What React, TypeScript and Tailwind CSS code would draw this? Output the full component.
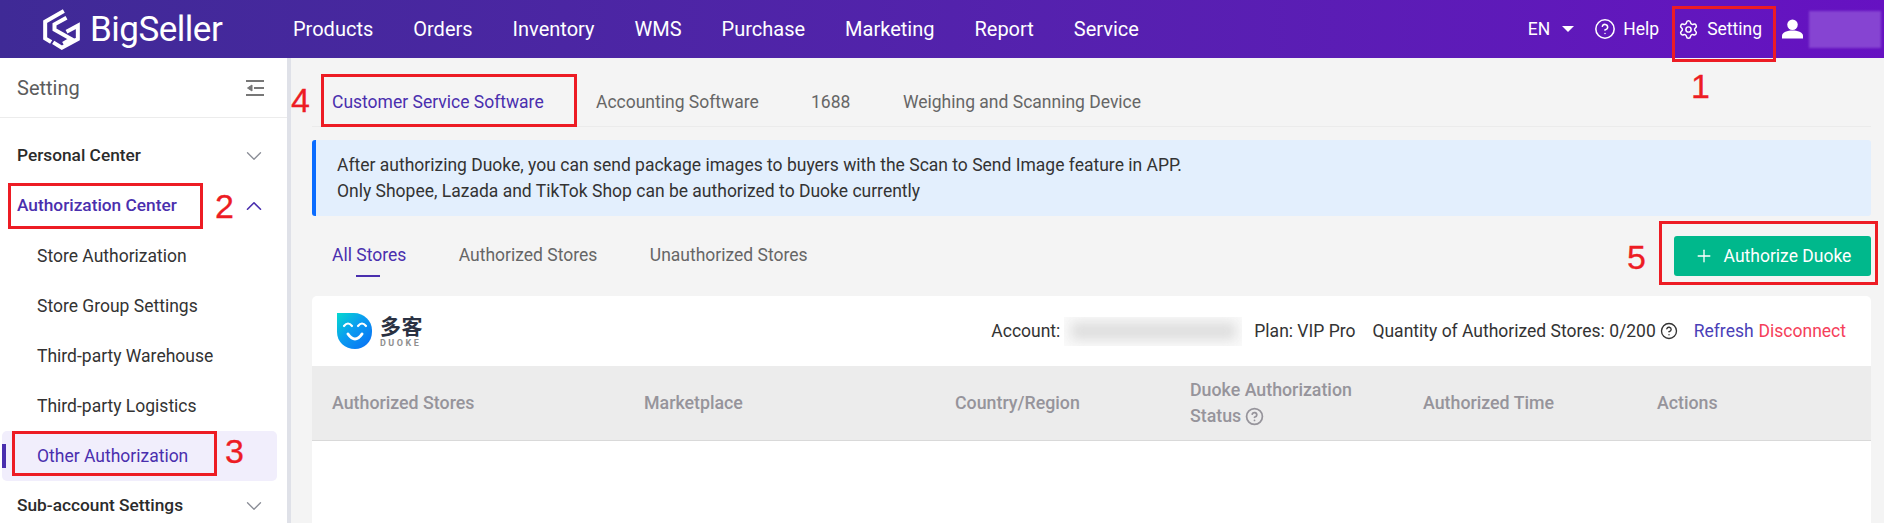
import React from "react";
import { ChevronDown, ChevronUp, Settings, Plus, CircleHelp } from "lucide-react";

const font = "[font-family:Roboto,'Noto_Sans_CJK_SC',sans-serif]";

function Logo() {
  return (
    <svg width="37" height="41" viewBox="0 0 110 123" fill="none" stroke="white" strokeWidth="12" strokeLinejoin="miter">
      <path d="M62 6 L6 38 V88 L24 99" />
      <path d="M70 26 L34 46 V62 L84 90 L60 104" />
      <path d="M30 100 L56 116 L104 90 V50 L70 68" />
    </svg>
  );
}

function DuokeLogo() {
  return (
    <svg width="35" height="36" viewBox="0 0 35 36" className="shrink-0">
      <defs>
        <linearGradient id="dk" x1="0" y1="0" x2="1" y2="1">
          <stop offset="0" stopColor="#05d9cf" />
          <stop offset="0.45" stopColor="#0a9cf0" />
          <stop offset="1" stopColor="#0a6cf5" />
        </linearGradient>
      </defs>
      <path d="M0 0 H17 C27 0 35 8 35 17 V19 C35 29 27 36 18 36 C8 36 0 29 0 19 Z" fill="url(#dk)" />
      <path d="M7 13 Q11 8 15 13 M21 13 Q25 8 29 13" stroke="white" strokeWidth="2.2" fill="none" strokeLinecap="round" />
      <path d="M11 21 Q18 31 25 21" stroke="white" strokeWidth="3" fill="none" strokeLinecap="round" />
    </svg>
  );
}

function RedBox({ className }: { className: string }) {
  return <div className={`absolute border-[3px] border-[#ed1c24] pointer-events-none ${className}`} />;
}

function RedNum({ className, children }: { className: string; children: React.ReactNode }) {
  return (
    <div className={`absolute text-[34px] leading-none text-[#ed1c24] [-webkit-text-stroke:0.3px_#ed1c24] [font-family:'Liberation_Sans',sans-serif] ${className}`}>
      {children}
    </div>
  );
}

const nav = ["Products", "Orders", "Inventory", "WMS", "Purchase", "Marketing", "Report", "Service"];
const subItems = ["Store Authorization", "Store Group Settings", "Third-party Warehouse", "Third-party Logistics"];

function Header() {
  return (
    <header className="h-[58px] flex items-center bg-gradient-to-r from-[#3f2a96] to-[#6611c2] text-white">
      <div className="w-[293px] shrink-0 flex items-center pl-[43px] gap-[10px]">
        <Logo />
        <span className="text-[35px] font-normal leading-none tracking-[-0.5px]">BigSeller</span>
      </div>
      <nav className="flex items-center gap-[40px] text-[20px]">
        {nav.map((n) => (
          <span key={n}>{n}</span>
        ))}
      </nav>
      <div className="ml-auto flex items-center text-[17.5px] pr-[3px]">
        <span>EN</span>
        <span className="ml-[12px] w-0 h-0 border-x-[6px] border-x-transparent border-t-[6px] border-t-white" />
        <CircleHelp className="ml-[20px]" size={22} strokeWidth={1.7} />
        <span className="ml-[7px]">Help</span>
        <Settings className="ml-[19px]" size={21} strokeWidth={1.7} />
        <span className="ml-[8px]">Setting</span>
        <svg className="ml-[20px]" width="21" height="22" viewBox="0 0 22 22" fill="white">
          <circle cx="11" cy="6.5" r="5.5" />
          <path d="M0 21 V18 C0 14.5 6 12.5 11 12.5 C16 12.5 22 14.5 22 18 V21 Z" />
        </svg>
        <div className="ml-[6px] w-[72px] h-[37px] bg-[#8644d2] blur-[1px]" />
      </div>
    </header>
  );
}

function GroupRow({ label, open, active }: { label: string; open?: boolean; active?: boolean }) {
  return (
    <div className={`h-[50px] flex items-center justify-between pl-[17px] pr-[20px] text-[17.3px] font-medium ${active ? "text-[#4a2fae]" : "text-[#2b2b2b]"}`}>
      <span>{label}</span>
      {open ? <ChevronUp size={26} strokeWidth={1.5} className="text-[#4a2fae]" /> : <ChevronDown size={26} strokeWidth={1.2} className="text-[#8a8d96]" />}
    </div>
  );
}

function Sidebar() {
  return (
    <aside className="w-[291px] shrink-0 bg-white border-r-[4px] border-[#dfe1e8] flex flex-col">
      <div className="h-[60px] shrink-0 flex items-center justify-between pl-[17px] pr-[23px] border-b border-[#ececec] text-[20px] text-[#5c5c5c]">
        <span>Setting</span>
        <svg width="18" height="16" viewBox="0 0 18 16" stroke="#777" strokeWidth="1.8" fill="none">
          <path d="M0 1 H18 M8 8 H18 M0 15 H18" />
          <path d="M6 5 L1.5 8 L6 11 Z" fill="#777" strokeWidth="1" />
        </svg>
      </div>
      <div className="pt-[13px] flex flex-col">
        <GroupRow label="Personal Center" />
        <GroupRow label="Authorization Center" open active />
        {subItems.map((s) => (
          <div key={s} className="h-[50px] flex items-center pl-[37px] text-[17.5px] text-[#333]">
            {s}
          </div>
        ))}
        <div className="relative h-[50px] ml-[2px] mr-[10px] flex items-center pl-[35px] text-[17.5px] text-[#4a2fae] bg-[#f1eefc] rounded-[5px]">
          <span className="absolute left-0 top-[13px] w-[4px] h-[24px] bg-[#4a2fae]" />
          Other Authorization
        </div>
        <GroupRow label="Sub-account Settings" />
      </div>
    </aside>
  );
}

function TopTabs() {
  const tabs = [
    { t: "Customer Service Software", c: "text-[#4a2fae] w-[264px]" },
    { t: "Accounting Software", c: "text-[#666] w-[215px]" },
    { t: "1688", c: "text-[#666] w-[92px]" },
    { t: "Weighing and Scanning Device", c: "text-[#666]" },
  ];
  return (
    <div className="h-[69px] ml-[21px] mr-[13px] flex items-end pb-[12px] border-b border-[#ebebeb] pl-[20px] text-[17.5px]">
      {tabs.map((x) => (
        <span key={x.t} className={`leading-[24px] ${x.c}`}>
          {x.t}
        </span>
      ))}
    </div>
  );
}

function Alert() {
  return (
    <div className="mt-[13px] ml-[21px] mr-[13px] h-[76px] bg-[#e3effd] border-l-[4px] border-[#0a6cff] rounded-[3px] pl-[21px] flex flex-col justify-center text-[17.5px] leading-[26px] text-[#333]">
      <div>After authorizing Duoke, you can send package images to buyers with the Scan to Send Image feature in APP.</div>
      <div>Only Shopee, Lazada and TikTok Shop can be authorized to Duoke currently</div>
    </div>
  );
}

function SubTabs() {
  return (
    <div className="h-[80px] ml-[41px] mr-[13px] flex items-center justify-between text-[17.5px]">
      <div className="flex items-center gap-[52.5px] -mt-[2px]">
        <span className="relative text-[#4a2fae]">
          All Stores
          <span className="absolute left-[24px] top-[33px] w-[24px] h-[2px] bg-[#4a2fae]" />
        </span>
        <span className="text-[#666]">Authorized Stores</span>
        <span className="text-[#666]">Unauthorized Stores</span>
      </div>
      <button className="h-[40px] w-[197px] rounded-[3px] bg-[#00b88c] text-white flex items-center justify-center gap-[10px] text-[17.5px]">
        <Plus size={20} strokeWidth={1.6} />
        Authorize Duoke
      </button>
    </div>
  );
}

function Card() {
  const cols = [
    { t: "Authorized Stores", w: "w-[312px]" },
    { t: "Marketplace", w: "w-[311px]" },
    { t: "Country/Region", w: "w-[235px]" },
    { t: "status", w: "w-[233px]" },
    { t: "Authorized Time", w: "w-[234px]" },
    { t: "Actions", w: "" },
  ];
  return (
    <div className="ml-[21px] mr-[13px] bg-white rounded-t-[5px] flex-1">
      <div className="h-[70px] flex items-center pl-[25px] pr-[25px] text-[17.5px] text-[#333]">
        <DuokeLogo />
        <div className="ml-[8px] flex flex-col w-[44px]">
          <span className="text-[21px] leading-[24px] font-bold text-[#2a3142] tracking-[0.5px] whitespace-nowrap">多客</span>
          <span className="text-[9px] leading-[9px] font-bold text-[#8f8f8f] tracking-[2.5px]">DUOKE</span>
        </div>
        <div className="ml-auto flex items-center">
          <span>Account:</span>
          <div className="ml-[4px] w-[178px] h-[29px] overflow-hidden bg-[#fafafa] flex items-center justify-center">
            <div className="w-[165px] h-[18px] bg-[#dedede] blur-[6px]" />
          </div>
          <span className="ml-[12px]">Plan: VIP Pro</span>
          <span className="ml-[17px]">Quantity of Authorized Stores: 0/200</span>
          <CircleHelp className="ml-[4px]" size={18} strokeWidth={1.8} />
          <span className="ml-[16px] text-[#4a3fb8]">Refresh</span>
          <span className="ml-[5px] text-[#f5405a]">Disconnect</span>
        </div>
      </div>
      <div className="h-[75px] bg-[#ececec] border-b border-[#d9d9d9] flex items-center pl-[20px] text-[17.8px] font-medium text-[#96949b]">
        {cols.map((c) =>
          c.t === "status" ? (
            <div key={c.t} className={`${c.w} leading-[26px]`}>
              <div>Duoke Authorization</div>
              <div className="flex items-center gap-[4px]">
                Status <CircleHelp size={19} strokeWidth={2.2} />
              </div>
            </div>
          ) : (
            <div key={c.t} className={c.w}>
              {c.t}
            </div>
          )
        )}
      </div>
    </div>
  );
}

export default function App() {
  return (
    <div className={`relative w-[1884px] h-[523px] overflow-hidden bg-[#f4f4f4] ${font}`}>
      <Header />
      <div className="flex h-[465px]">
        <Sidebar />
        <main className="flex-1 flex flex-col">
          <TopTabs />
          <Alert />
          <SubTabs />
          <Card />
        </main>
      </div>
      <RedBox className="left-[1672px] top-[6px] w-[104px] h-[56px]" />
      <RedBox className="left-[8px] top-[183px] w-[195px] h-[46px]" />
      <RedBox className="left-[12px] top-[431px] w-[205px] h-[45px]" />
      <RedBox className="left-[321px] top-[74px] w-[256px] h-[53px]" />
      <RedBox className="left-[1659px] top-[221px] w-[219px] h-[64px]" />
      <RedNum className="left-[1691px] top-[69px]">1</RedNum>
      <RedNum className="left-[215px] top-[189px]">2</RedNum>
      <RedNum className="left-[225px] top-[434px]">3</RedNum>
      <RedNum className="left-[291px] top-[83px]">4</RedNum>
      <RedNum className="left-[1627px] top-[240px]">5</RedNum>
    </div>
  );
}
